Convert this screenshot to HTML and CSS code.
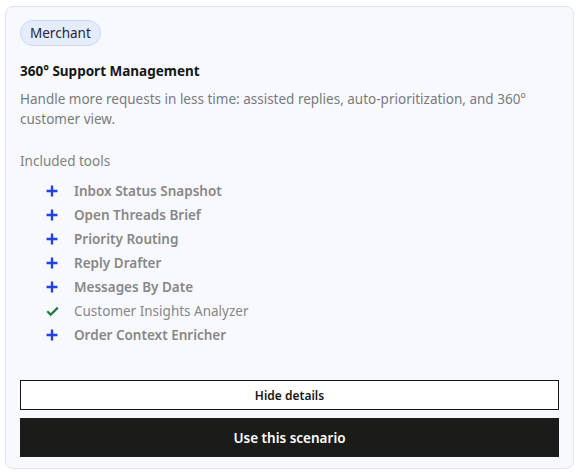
FILE: index.html
```html
<!DOCTYPE html>
<html>
<head>
<meta charset="utf-8">
<link rel="stylesheet" href="styles.css">
</head>
<body>
<div class="card">
  <span class="badge">Merchant</span>
  <h2 class="title">360° Support Management</h2>
  <p class="desc">Handle more requests in less time: assisted replies, auto-prioritization, and 360° customer view.</p>
  <div class="tools-label">Included tools</div>
  <ul class="tools">
    <li class="tool add"><span class="icon"><svg width="12" height="12" viewBox="0 0 12 12"><path d="M6 0.5v11M0.5 6h11" stroke="#1f44e0" stroke-width="2.4"/></svg></span>Inbox Status Snapshot</li>
    <li class="tool add"><span class="icon"><svg width="12" height="12" viewBox="0 0 12 12"><path d="M6 0.5v11M0.5 6h11" stroke="#1f44e0" stroke-width="2.4"/></svg></span>Open Threads Brief</li>
    <li class="tool add"><span class="icon"><svg width="12" height="12" viewBox="0 0 12 12"><path d="M6 0.5v11M0.5 6h11" stroke="#1f44e0" stroke-width="2.4"/></svg></span>Priority Routing</li>
    <li class="tool add"><span class="icon"><svg width="12" height="12" viewBox="0 0 12 12"><path d="M6 0.5v11M0.5 6h11" stroke="#1f44e0" stroke-width="2.4"/></svg></span>Reply Drafter</li>
    <li class="tool add"><span class="icon"><svg width="12" height="12" viewBox="0 0 12 12"><path d="M6 0.5v11M0.5 6h11" stroke="#1f44e0" stroke-width="2.4"/></svg></span>Messages By Date</li>
    <li class="tool done"><span class="icon"><svg width="13" height="12" viewBox="0 0 13 12"><path d="M1.3 6.3l3.4 3.4L11.8 2.6" fill="none" stroke="#1f7a3e" stroke-width="2.2"/></svg></span>Customer Insights Analyzer</li>
    <li class="tool add"><span class="icon"><svg width="12" height="12" viewBox="0 0 12 12"><path d="M6 0.5v11M0.5 6h11" stroke="#1f44e0" stroke-width="2.4"/></svg></span>Order Context Enricher</li>
  </ul>
  <div class="actions">
    <button class="btn secondary">Hide details</button>
    <button class="btn primary">Use this scenario</button>
  </div>
</div>
</body>
</html>
```
FILE: styles.css
```css
html, body {
  margin: 0;
  padding: 0;
  background: #ffffff;
}
body {
  padding: 6px 6px 7px 5px;
  font-family: "Noto Sans", "Liberation Sans", sans-serif;
}
.card {
  box-sizing: border-box;
  height: 463px;
  border: 1px solid #e1e3ee;
  border-radius: 8px;
  background: #f8f9fe;
  padding: 13px 14px 11px 14px;
  display: flex;
  flex-direction: column;
}
.badge {
  align-self: flex-start;
  box-sizing: border-box;
  height: 26px;
  padding: 0 9px;
  border: 1px solid #c8d7f6;
  border-radius: 13px;
  background: #e5edfd;
  color: #1d2540;
  font-size: 13.5px;
  line-height: 24px;
}
.title {
  margin: 15px 0 0 0;
  font-size: 13.5px;
  font-weight: 700;
  line-height: 20px;
  color: #161616;
}
.desc {
  margin: 8px 0 0 0;
  font-size: 13.5px;
  line-height: 20px;
  color: #7a7a7a;
}
.tools-label {
  margin-top: 22px;
  font-size: 13.5px;
  line-height: 20px;
  color: #808080;
}
.tools {
  list-style: none;
  margin: 10px 0 0 0;
  padding: 0 0 0 26px;
  display: flex;
  flex-direction: column;
  gap: 4px;
}
.tool {
  display: flex;
  align-items: center;
  height: 20px;
  font-size: 13.5px;
  color: #878787;
}
.tool.add {
  font-weight: 600;
}
.icon {
  width: 28px;
  display: flex;
  align-items: center;
}
.actions {
  margin-top: auto;
  display: flex;
  flex-direction: column;
  gap: 8px;
}
.btn {
  font-family: inherit;
  width: 100%;
  cursor: pointer;
  font-weight: 600;
  color: #161616;
}
.btn.secondary {
  height: 30px;
  border: 1px solid #161616;
  background: #ffffff;
  font-size: 12px;
}
.btn.primary {
  height: 39px;
  border: none;
  background: #1b1b1a;
  color: #ffffff;
  font-size: 13.5px;
}
```
